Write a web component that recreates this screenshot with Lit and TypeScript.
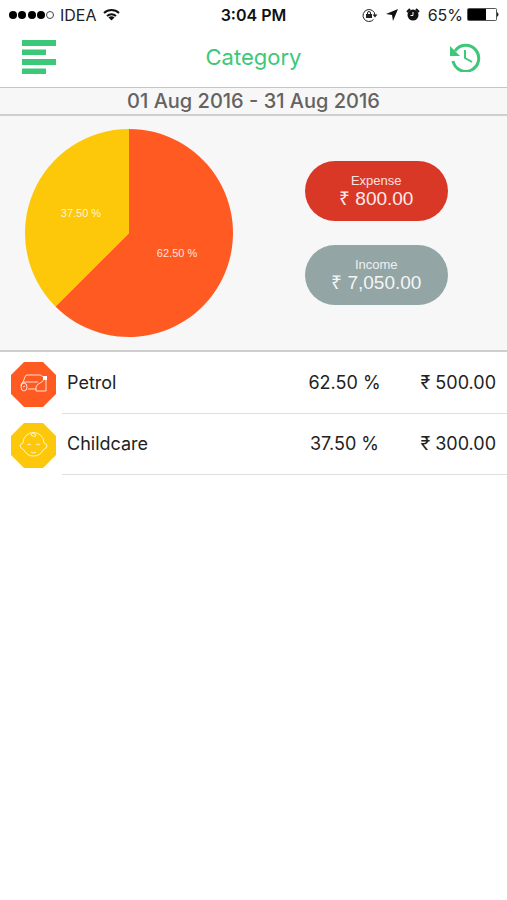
import { LitElement, html, svg, css } from "lit";
import { customElement, property } from "lit/decorators.js";

interface Category {
  name: string;
  share: number;
  amount: string;
  color: string;
  icon: unknown;
}

const carIcon = svg`
  <path d="M12 20l2-5q.5-2 2-2h13q2 0 2.500 2M12 20h15M12 20q-2 1-2 4M17 27h8"/>
  <path d="M33 17q-1 3-4 4t-4 4v4h10V17"/>
  <ellipse cx="13" cy="25" rx="3" ry="4"/>
  <path d="M12 25l2-1"/>
  <rect x="32" y="14" width="4" height="4" fill="#fff" stroke="none"/>
`;

const babyIcon = svg`
  <path d="M12 20a10.500 10.500 0 0 1 21 0q3 1 3 3t-4 4a10.500 10.500 0 0 1-19 0q-4-2-4-4t3-3"/>
  <path d="M20 12q0-2 2-2t3 3M20 12q2 2 5 1M16 22q2-2 4 0M25 22q2-2 4 0M20 29q2 2 5 0"/>
`;

const categories: Category[] = [
  { name: "Petrol", share: 62.5, amount: "₹ 500.00", color: "#ff5a22", icon: carIcon },
  { name: "Childcare", share: 37.5, amount: "₹ 300.00", color: "#fdc70a", icon: babyIcon },
];

@customElement("status-bar")
export class StatusBar extends LitElement {
  static styles = css`
    :host {
      display: grid;
      grid-template-columns: 1fr auto 1fr;
      align-items: center;
      height: 29px;
      padding: 0 8px;
      font-size: 16px;
      color: #222;
    }
    .side { display: flex; align-items: center; gap: 6px; }
    .end { justify-content: flex-end; gap: 8px; }
    .power { display: flex; align-items: center; gap: 4px; }
    .time { font-weight: 600; color: #111; }
    svg { display: block; }
  `;

  render() {
    return html`
      <div class="side">
        <svg width="46" height="10" viewBox="0 0 46 10" aria-label="Signal strength">
          ${[5, 14, 24, 33].map((x) => svg`<circle cx=${x} cy="5" r="4" fill="#000" />`)}
          <circle cx="42" cy="5" r="3.500" fill="none" stroke="#444" />
        </svg>
        <span>IDEA</span>
        <svg width="17" height="13" viewBox="0 0 17 13" fill="none" stroke="#111" stroke-width="2">
          <path d="M1 5a11 11 0 0 1 15 0M4 8a7 7 0 0 1 9 0" />
          <path d="M8.500 12.500l-3-3a4 4 0 0 1 6 0z" fill="#111" stroke="none" />
        </svg>
      </div>
      <span class="time">3:04 PM</span>
      <div class="side end">
        <svg width="16" height="14" viewBox="0 0 16 14" fill="none" stroke="#222">
          <path d="M11.500 11.500a6 6 0 1 1 1.500-4.500" />
          <path d="M10.500 6.500h5l-2.500 3z" fill="#222" stroke="none" />
          <rect x="4" y="6" width="6" height="4" fill="#222" stroke="none" />
          <path d="M5.500 6V5a1.500 1.500 0 0 1 3 0v1" />
        </svg>
        <svg width="12" height="12" viewBox="0 0 12 12"><path d="M12 0L7 12 6 6 0 5z" fill="#111" /></svg>
        <svg width="14" height="13" viewBox="0 0 14 13">
          <circle cx="7" cy="7" r="5.500" fill="#111" />
          <path d="M1 4l3-3M13 4l-3-3" stroke="#111" stroke-width="2" />
          <path d="M7 4v3.500H4.500" fill="none" stroke="#fff" />
        </svg>
        <div class="power">
          <span>65%</span>
          <svg width="32" height="13" viewBox="0 0 32 13">
            <rect x=".5" y=".5" width="29" height="12" rx="1" fill="#fff" stroke="#555" />
            <rect x="1" y="1" width="18" height="11" fill="#000" />
            <path d="M30 4q3 2.500 0 5z" fill="#222" />
          </svg>
        </div>
      </div>
    `;
  }
}

@customElement("share-pie")
export class SharePie extends LitElement {
  @property({ attribute: false }) items: Category[] = [];

  static styles = css`
    :host { display: block; }
    svg { display: block; }
    text {
      font: 11px "Liberation Sans", Arial, sans-serif;
      fill: #fff;
      fill-opacity: 0.85;
      text-anchor: middle;
    }
  `;

  render() {
    const r = 104;
    const at = (share: number, radius: number) => {
      const angle = (share / 100) * Math.PI * 2;
      return [r + radius * Math.sin(angle), r - radius * Math.cos(angle)];
    };
    let start = 0;
    return html`
      <svg width="208" height="208" viewBox="0 0 208 208" role="img" aria-label="Spending by category">
        ${this.items.map((item) => {
          const end = start + item.share;
          const [x1, y1] = at(start, r);
          const [x2, y2] = at(end, r);
          const [tx, ty] = at((start + end) / 2, r / 2);
          const large = item.share > 50 ? 1 : 0;
          start = end;
          return svg`
            <path fill=${item.color} d="M${r} ${r}L${x1} ${y1}A${r} ${r} 0 ${large} 1 ${x2} ${y2}Z" />
            <text x=${tx} y=${ty + 4}>${item.share.toFixed(2)} %</text>
          `;
        })}
      </svg>
    `;
  }
}

@customElement("app-root")
export class AppRoot extends LitElement {
  static styles = css`
    :host {
      display: block;
      min-height: 100vh;
      background: #fff;
      font-family: Inter, "Noto Sans", sans-serif;
      color: #222;
    }
    svg { display: block; }
    button { border: 0; padding: 0; background: none; font: inherit; cursor: pointer; }
    header {
      display: grid;
      grid-template-columns: 1fr auto 1fr;
      align-items: center;
      height: 56px;
      padding: 0 22px 2px;
      border-bottom: 1px solid #c4c4c4;
    }
    .history { justify-self: end; margin-right: 4px; }
    .menu { justify-self: start; }
    h1 { margin: 0; font-size: 22px; line-height: 28px; font-weight: 400; color: #3cc878; }
    .period {
      display: flex;
      align-items: center;
      justify-content: center;
      height: 26px;
      border-bottom: 2px solid #cfcfcf;
      background: #f7f7f7;
      font-size: 20px;
      font-weight: 500;
      color: #636363;
    }
    .summary {
      display: grid;
      grid-template-columns: 1fr 1fr;
      align-items: center;
      justify-items: center;
      padding: 13px 7px 13px 5px;
      border-bottom: 2px solid #cfcfcf;
      background: #f7f7f7;
    }
    .totals { display: grid; gap: 24px; }
    .pill {
      display: flex;
      flex-direction: column;
      align-items: center;
      justify-content: center;
      width: 143px;
      height: 60px;
      border-radius: 30px;
      color: #fff;
      font-family: "Liberation Sans", Arial, sans-serif;
      font-size: 19px;
      line-height: 20px;
    }
    .label { font-size: 13px; line-height: 16px; opacity: 0.85; }
    .sum { opacity: 0.9; }
    .expense { background: #d93827; }
    .income { background: #94a5a5; }
    table { width: 100%; border-collapse: collapse; table-layout: fixed; font-size: 18px; }
    td, th { height: 60px; padding: 0; font-weight: 400; border-bottom: 1px solid #dedede; }
    td.icon { width: 51px; height: 57px; padding: 4px 0 0 11px; border-bottom: 0; }
    .name { text-align: left; padding-left: 5px; }
    .share { width: 103px; text-align: center; }
    .amount { width: 100px; padding-right: 11px; text-align: right; }
  `;

  render() {
    return html`
      <status-bar></status-bar>
      <header>
        <button class="menu" aria-label="Menu">
          <svg width="34" height="34" viewBox="0 0 34 34" fill="#3cc878">
            <path d="M0 0h34v6H0zM0 9.500h24v5.500H0zM0 19h34v6H0zM0 28.500h24V34H0z" />
          </svg>
        </button>
        <h1>Category</h1>
        <button class="history" aria-label="History">
          <svg width="32" height="30" viewBox="0 0 32 30" fill="none" stroke="#3cc878" stroke-width="3">
            <path d="M6 9a13 13 0 1 1-2 10" />
            <path d="M1 4v10h10z" fill="#3cc878" stroke="none" />
            <path d="M16 8v8l7 4" stroke-width="2" />
          </svg>
        </button>
      </header>
      <div class="period">01 Aug 2016 - 31 Aug 2016</div>
      <section class="summary">
        <share-pie .items=${categories}></share-pie>
        <div class="totals">
          <button class="pill expense"><span class="label">Expense</span><span class="sum">₹ 800.00</span></button>
          <button class="pill income"><span class="label">Income</span><span class="sum">₹ 7,050.00</span></button>
        </div>
      </section>
      <table aria-label="Categories">
        <tbody>
          ${categories.map(
            (c) => html`
              <tr>
                <td class="icon">
                  <svg width="45" height="45" viewBox="0 0 45 45" fill="none" stroke="#fff" stroke-opacity="0.8">
                    <path d="M13 0h19l13 13v19L32 45H13L0 32V13z" fill=${c.color} stroke="none" />
                    ${c.icon}
                  </svg>
                </td>
                <th class="name" scope="row">${c.name}</th>
                <td class="share">${c.share.toFixed(2)} %</td>
                <td class="amount">${c.amount}</td>
              </tr>
            `
          )}
        </tbody>
      </table>
    `;
  }
}
